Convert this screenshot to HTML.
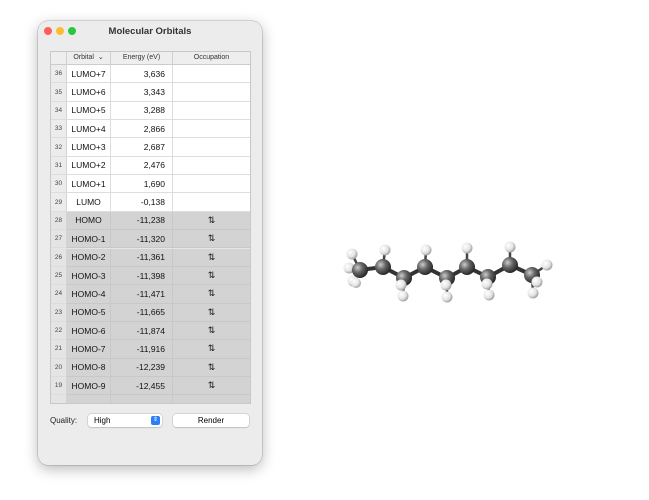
<!DOCTYPE html>
<html><head><style>
body{margin:0;width:649px;height:500px;background:#fff;font-family:"Liberation Sans",sans-serif;position:relative;overflow:hidden}
.win{position:absolute;left:38px;top:21px;width:224px;height:444px;background:#ececec;border-radius:10px;box-shadow:0 4px 14px rgba(0,0,0,.28),0 0 0 .5px rgba(0,0,0,.25)}
.title{position:absolute;left:0;top:0;width:224px;height:22px;text-align:center;font-size:9.5px;font-weight:bold;line-height:21px;color:#333}
.dot{position:absolute;top:6px;width:8px;height:8px;border-radius:50%}
.tbl{position:absolute;left:12px;top:30px;width:199px;height:351px;border:1px solid #c8c8c8;background:#e6e6e6;overflow:hidden}
.hdr{position:absolute;top:0;height:12px;font-size:7px;line-height:12px;text-align:center;color:#333;background:#eee;border-right:1px solid #d0d0d0;border-bottom:1px solid #ccc}
.row{position:absolute;left:0;width:199px;height:18.35px;font-size:8.5px;color:#111}
.row div{position:absolute;top:0;height:100%;box-sizing:border-box;border-bottom:1px solid #ddd;display:flex;align-items:center}
.n{left:0;width:16px;font-size:6.5px;justify-content:center;background:#ececec;color:#444;border-right:1px solid #d4d4d4}
.o{left:16px;width:44px;justify-content:center;border-right:1px solid #ddd}
.e{left:60px;width:62px;justify-content:flex-end;padding-right:7px;border-right:1px solid #ddd}
.c{left:122px;width:77px;justify-content:center;font-size:9px}
.w .o,.w .e,.w .c{background:#fff}
.g .o,.g .e,.g .c{background:#d3d3d3;border-color:#c8c8c8}
.g .n{background:#e4e4e4}
</style></head><body>
<div class="win">
<div class="dot" style="left:6px;background:#fe5f57"></div>
<div class="dot" style="left:18px;background:#febc2e"></div>
<div class="dot" style="left:30px;background:#28c840"></div>
<div class="title">Molecular Orbitals</div>
<div class="tbl">
<div class="hdr" style="left:0;width:15px"></div>
<div class="hdr" style="left:16px;width:43px">Orbital &nbsp;⌄</div>
<div class="hdr" style="left:60px;width:61px">Energy (eV)</div>
<div class="hdr" style="left:122px;width:77px;border-right:0">Occupation</div>
<div id="rows"></div>
</div>
<div style="position:absolute;left:12px;top:395px;font-size:8px;color:#222">Quality:</div>
<div style="position:absolute;left:50px;top:393px;width:74px;height:13px;background:#fff;border-radius:3px;box-shadow:0 0 0 .5px #bbb,0 1px 1px rgba(0,0,0,.15);font-size:8px;line-height:13px;padding-left:6px;box-sizing:border-box">High<span style="position:absolute;right:2px;top:2px;width:9px;height:9px;background:#2d7ff9;border-radius:2px;color:#fff;font-size:6px;line-height:9px;text-align:center">⇕</span></div>
<div style="position:absolute;left:135px;top:393px;width:76px;height:13px;background:#fff;border-radius:3px;box-shadow:0 0 0 .5px #bbb,0 1px 1px rgba(0,0,0,.15);font-size:8px;line-height:13px;text-align:center">Render</div>
</div>
<svg style="position:absolute;left:0;top:0" width="649" height="500">
<defs><radialGradient id="c" cx=".35" cy=".35" r=".7"><stop offset="0" stop-color="#ccc"/><stop offset=".45" stop-color="#666"/><stop offset="1" stop-color="#222"/></radialGradient>
<radialGradient id="h" cx=".35" cy=".35" r=".7"><stop offset="0" stop-color="#fff"/><stop offset=".6" stop-color="#e4e4e4"/><stop offset="1" stop-color="#999"/></radialGradient></defs>
<g stroke="#333" stroke-width="4">
<polyline fill="none" points="360,270 383,267 404,278 425,267 447,278 467,267 488,277 510,265 532,275"/>
</g>
<g stroke="#444" stroke-width="2.5">
<line x1="360" y1="270" x2="352" y2="254"/><line x1="360" y1="270" x2="349" y2="268"/><line x1="360" y1="270" x2="353" y2="280"/>
<line x1="383" y1="267" x2="385" y2="250"/><line x1="425" y1="267" x2="426" y2="250"/><line x1="467" y1="267" x2="467" y2="248"/><line x1="510" y1="265" x2="510" y2="247"/>
<line x1="404" y1="278" x2="403" y2="296"/><line x1="447" y1="278" x2="447" y2="297"/><line x1="488" y1="277" x2="489" y2="295"/>
<line x1="532" y1="275" x2="547" y2="265"/><line x1="532" y1="275" x2="533" y2="293"/>
</g>
<g fill="url(#h)">
<circle cx="352" cy="254" r="5.5"/><circle cx="349" cy="268" r="5.5"/><circle cx="353" cy="281" r="5.5"/>
<circle cx="385" cy="250" r="5.5"/><circle cx="426" cy="250" r="5.5"/><circle cx="467" cy="248" r="5.5"/><circle cx="510" cy="247" r="5.5"/>
<circle cx="403" cy="296" r="5.5"/><circle cx="447" cy="297" r="5.5"/><circle cx="489" cy="295" r="5.5"/>
<circle cx="547" cy="265" r="5.5"/><circle cx="533" cy="293" r="5.5"/>
</g>
<g fill="url(#c)">
<circle cx="360" cy="270" r="8"/><circle cx="383" cy="267" r="8"/><circle cx="404" cy="278" r="8"/><circle cx="425" cy="267" r="8"/><circle cx="447" cy="278" r="8"/><circle cx="467" cy="267" r="8"/><circle cx="488" cy="277" r="8"/><circle cx="510" cy="265" r="8"/><circle cx="532" cy="275" r="8"/>
</g>
<g fill="url(#h)">
<circle cx="356" cy="283" r="5"/><circle cx="401" cy="285" r="5.5"/><circle cx="446" cy="285" r="5.5"/><circle cx="487" cy="284" r="5.5"/><circle cx="537" cy="282" r="5.5"/>
</g>
</svg>
<script>
var d=[[36,"LUMO+7","3,636",""],[35,"LUMO+6","3,343",""],[34,"LUMO+5","3,288",""],[33,"LUMO+4","2,866",""],[32,"LUMO+3","2,687",""],[31,"LUMO+2","2,476",""],[30,"LUMO+1","1,690",""],[29,"LUMO","-0,138",""],[28,"HOMO","-11,238","⇅"],[27,"HOMO-1","-11,320","⇅"],[26,"HOMO-2","-11,361","⇅"],[25,"HOMO-3","-11,398","⇅"],[24,"HOMO-4","-11,471","⇅"],[23,"HOMO-5","-11,665","⇅"],[22,"HOMO-6","-11,874","⇅"],[21,"HOMO-7","-11,916","⇅"],[20,"HOMO-8","-12,239","⇅"],[19,"HOMO-9","-12,455","⇅"],[18,"","",""]];
var h="";d.forEach(function(r,i){h+='<div class="row '+(r[3]||r[0]==18?'g':'w')+'" style="top:'+(13+i*18.35)+'px"><div class="n">'+(r[0]==18?'':r[0])+'</div><div class="o">'+r[1]+'</div><div class="e">'+r[2]+'</div><div class="c">'+r[3]+'</div></div>'});
document.getElementById("rows").innerHTML=h;
</script>
</body></html>
